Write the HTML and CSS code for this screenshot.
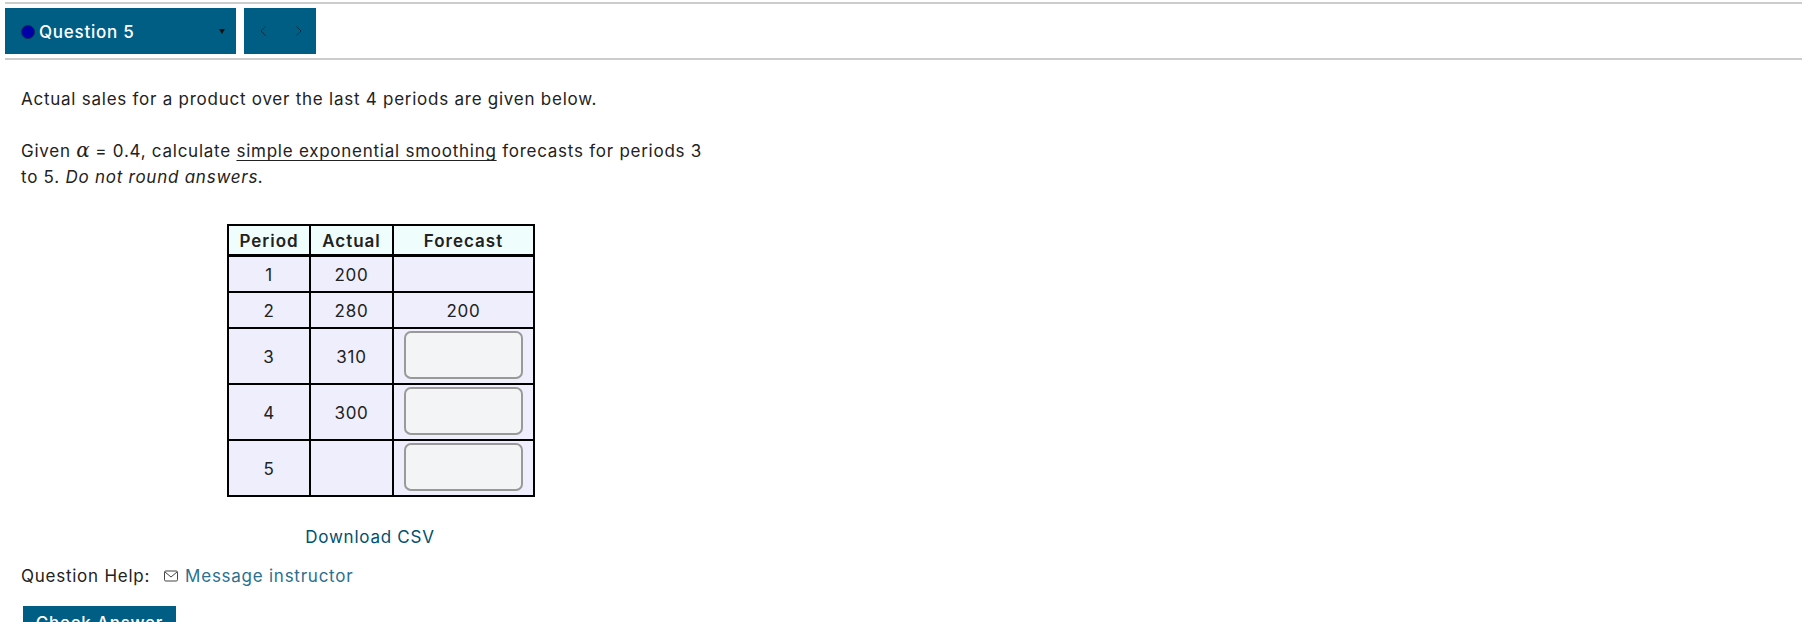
FILE: index.html
```html
<!DOCTYPE html>
<html lang="en">
<head>
<meta charset="utf-8">
<title>Question 5</title>
<link rel="stylesheet" href="styles.css">
</head>
<body>
<div class="page">
  <nav class="qbar">
    <div class="qselect">
      <span class="dot"></span>
      <span class="qname">Question 5</span>
      <span class="caret"></span>
    </div>
    <div class="qnav">
      <svg class="chev" width="8" height="12" viewBox="0 0 8 12"><path d="M6.5 1.5 2 6l4.5 4.5"/></svg>
      <svg class="chev" width="8" height="12" viewBox="0 0 8 12"><path d="M1.5 1.5 6 6l-4.5 4.5"/></svg>
    </div>
  </nav>
  <main class="question">
    <p class="intro">Actual sales for a product over the last 4 periods are given below.</p>
    <p class="prompt">Given <span class="alpha">α</span> = 0.4, calculate <span class="term">simple exponential smoothing</span> forecasts for periods 3 to 5. <em>Do not round answers.</em></p>
    <div class="tablewrap">
      <table class="data">
        <thead>
          <tr><th class="c1">Period</th><th class="c2">Actual</th><th class="c3">Forecast</th></tr>
        </thead>
        <tbody>
          <tr class="short"><td>1</td><td>200</td><td></td></tr>
          <tr class="short"><td>2</td><td>280</td><td>200</td></tr>
          <tr><td>3</td><td>310</td><td class="cellinput"><input class="answer" type="text" aria-label="Forecast period 3"></td></tr>
          <tr><td>4</td><td>300</td><td class="cellinput"><input class="answer" type="text" aria-label="Forecast period 4"></td></tr>
          <tr><td>5</td><td></td><td class="cellinput"><input class="answer" type="text" aria-label="Forecast period 5"></td></tr>
        </tbody>
      </table>
      <a class="csv" href="#">Download CSV</a>
    </div>
    <div class="help">
      <span class="helplabel">Question Help:</span>
      <svg class="mail" width="14" height="12" viewBox="0 0 14 12"><rect x="0.5" y="1" width="13" height="10" rx="1.2"/><path d="M1 2 7 7l6-5"/></svg>
      <a class="msg" href="#">Message instructor</a>
    </div>
    <button class="check" type="button">Check Answer</button>
  </main>
</div>
</body>
</html>
```
FILE: styles.css
```css
html, body {
  margin: 0;
  height: 622px;
  overflow: hidden;
  background: #fff;
}
body {
  font-family: Inter, "Liberation Sans", sans-serif;
  font-size: 17px;
  letter-spacing: 0.75px;
  line-height: 26px;
  color: #222;
}
.page {
  padding: 2px 0 0 5px;
}
.qbar {
  display: flex;
  gap: 8px;
  padding: 4px 0;
  border-top: 2px solid #ccc;
  border-bottom: 2px solid #ccc;
}
.qselect {
  width: 231px;
  height: 46px;
  background: #005e85;
  display: flex;
  align-items: center;
  padding: 1px 11px 0 16px;
  box-sizing: border-box;
  color: #fff;
  font-weight: 500;
}
.dot {
  width: 12px;
  height: 12px;
  border-radius: 50%;
  background: #0000a8;
  border: 0.5px solid #0a2a50;
  margin-right: 4px;
}
.qname {
  flex: 1;
}
.caret {
  width: 0;
  height: 0;
  border-left: 3.5px solid transparent;
  border-right: 3.5px solid transparent;
  border-top: 5px solid #111;
}
.qnav {
  width: 72px;
  height: 46px;
  background: #005e85;
  display: flex;
  align-items: center;
  justify-content: space-between;
  padding: 0 13px 0 15px;
  box-sizing: border-box;
}
.chev {
  fill: none;
  stroke: #0b2c40;
  stroke-width: 1;
}
.question {
  padding: 0 0 0 16px;
}
.intro {
  margin: 26px 0 26px;
}
.prompt {
  margin: 0;
  width: 690px;
}
.alpha {
  font-family: "DejaVu Serif", serif;
  font-style: italic;
  font-size: 20px;
  line-height: 20px;
  letter-spacing: 0;
}
.term {
  text-decoration: underline 1px;
  text-decoration-skip-ink: none;
  text-underline-offset: 3px;
}
.tablewrap {
  width: 698px;
  display: flex;
  flex-direction: column;
  align-items: center;
  margin-top: 34px;
}
.data {
  border-collapse: collapse;
  border: 2px solid #000;
  text-align: center;
  margin-left: 22px;
}
.data th, .data td {
  border: 2px solid #000;
  padding: 1px 0 0;
}
.data th {
  background: #effdfd;
  height: 27px;
  font-weight: 600;
  letter-spacing: 1px;
  border-bottom-width: 3px;
}
.data td {
  background: #eeeefc;
  height: 53px;
}
.data .short td {
  height: 33px;
}
.data .cellinput {
  padding: 0 0 2px;
  height: 52px;
}
.c1 { width: 80px; }
.c2 { width: 81px; }
.c3 { width: 139px; }
.answer {
  display: block;
  width: 119px;
  height: 48px;
  box-sizing: border-box;
  margin: 0 auto;
  background: #f3f4f6;
  border: 2px solid #999;
  border-radius: 7px;
}
.csv {
  color: #00506f;
  text-decoration: none;
  margin-top: 27px;
}
.help {
  display: flex;
  align-items: center;
  margin-top: 13px;
}
.helplabel {
  margin-right: 14px;
}
.mail {
  fill: none;
  stroke: #444;
  stroke-width: 1;
  margin-right: 7px;
}
.msg {
  color: #2a7090;
  text-decoration: none;
}
.check {
  display: block;
  margin: 17px 0 0 2px;
  width: 153px;
  height: 34px;
  background: #005e85;
  color: #fff;
  border: 0;
  letter-spacing: 0.75px;
  font: 500 17px Inter, "Liberation Sans", sans-serif;
}
```
